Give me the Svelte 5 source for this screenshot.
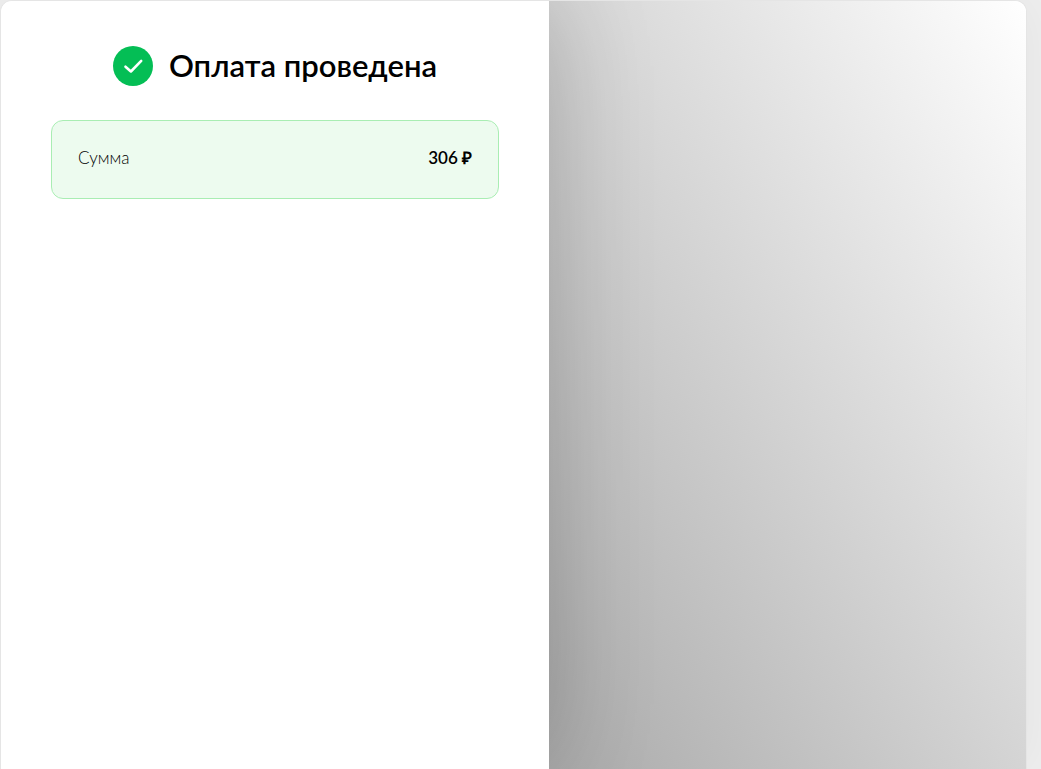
<script>
  const amount = '306 ₽';
</script>

<main class="card">
  <section class="result">
    <header class="status">
      <svg class="badge" viewBox="0 0 40 40" aria-hidden="true">
        <circle cx="20" cy="20" r="20" fill="#04be55" />
        <path d="M12.5 20.7 17.9 25.5 28.2 14.9" fill="none" stroke="#fff" stroke-width="2.6" stroke-linecap="round" stroke-linejoin="round" />
      </svg>
      <h1>Оплата проведена</h1>
    </header>
    <dl class="summary">
      <dt>Сумма</dt>
      <dd>{amount}</dd>
    </dl>
  </section>
  <aside class="cover"></aside>
</main>

<style>
  :global(body) {
    background: #eee;
    overflow: hidden;
  }

  .card {
    display: grid;
    grid-template-columns: 548px 1fr;
    box-sizing: border-box;
    min-height: 100vh;
    margin-right: 14px;
    overflow: hidden;
    border: 1px solid #e5e5e5;
    border-bottom: 0;
    border-radius: 12px 12px 0 0;
    background: #fff;
    box-shadow: 0 0 50px rgba(0, 0, 0, 0.05);
    color: #000;
    font-family: Lato, "Open Sans", sans-serif;
  }

  .result {
    z-index: 1;
    padding: 45px 50px 40px;
    background: #fff;
    box-shadow: 0 0 100px rgba(0, 0, 0, 0.2);
  }

  .status {
    display: flex;
    align-items: center;
    justify-content: center;
    gap: 16px;
    height: 40px;
    margin-bottom: 34px;
  }

  .badge {
    flex: none;
    width: 40px;
    height: 40px;
  }

  h1 {
    margin: 0;
    padding-bottom: 3px;
    font-size: 31px;
    font-weight: 600;
    line-height: 36px;
    white-space: nowrap;
  }

  .summary {
    display: flex;
    justify-content: space-between;
    margin: 0;
    padding: 26px 26px 30px;
    border: 1px solid #a9edb3;
    border-radius: 12px;
    background: #edfbef;
    font-size: 17px;
    line-height: 21px;
  }

  dt {
    font-weight: 300;
  }

  dd {
    margin: 0;
    font-weight: 600;
  }

  .cover {
    background: linear-gradient(to top right, #aaa, #fff);
  }
</style>
